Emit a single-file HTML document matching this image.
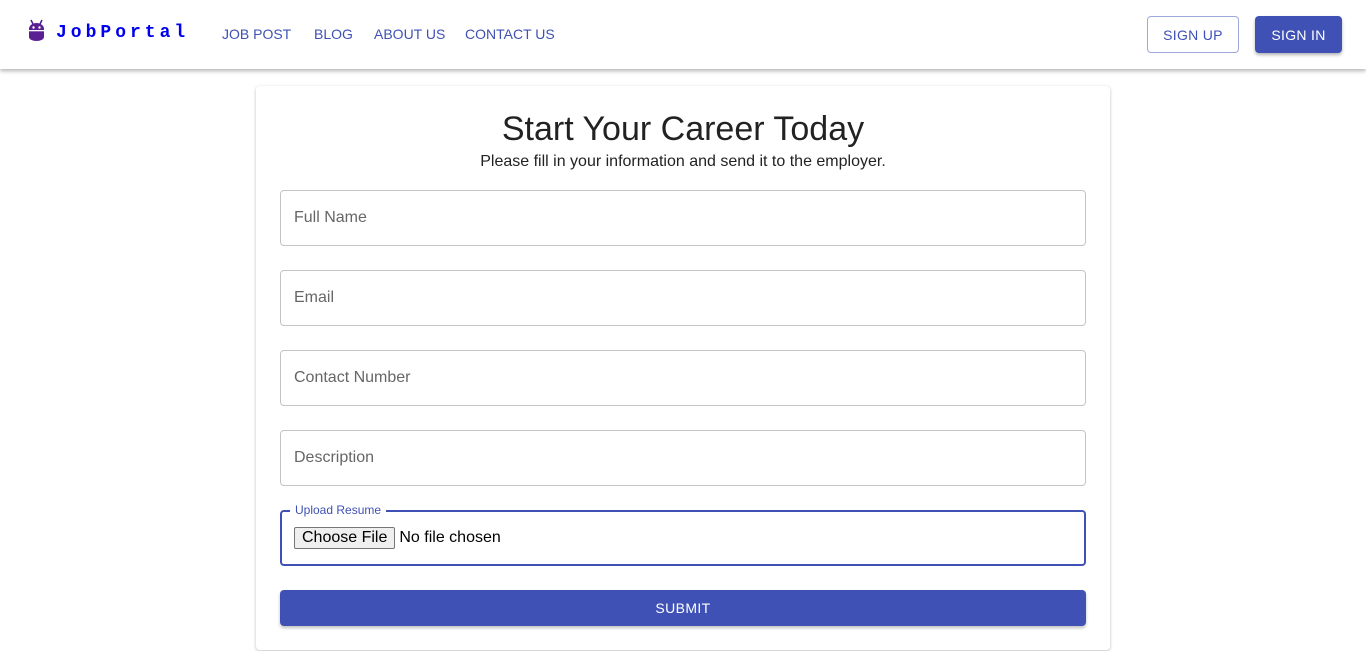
<!DOCTYPE html>
<html><head><style>
*{box-sizing:border-box;margin:0;padding:0}
body{width:1366px;height:651px;overflow:hidden;background:#fff;font-family:"Liberation Sans",sans-serif;position:relative}
.bar{position:absolute;left:0;top:0;width:1366px;height:69px;background:#fff;box-shadow:0 2px 4px rgba(0,0,0,.3);z-index:2}
.logo{position:absolute;left:56px;top:23px;font-family:"Liberation Mono",monospace;font-weight:bold;font-size:18px;letter-spacing:4px;color:#0000ee}
.nav{position:absolute;top:26px;font-size:14px;color:#3f51b5}
.btn{position:absolute;top:16px;height:37px;border-radius:4px;font-size:14px;display:flex;align-items:center;justify-content:center;letter-spacing:.3px}
.card{position:absolute;left:256px;top:86px;width:854px;height:564px;border-radius:4px;box-shadow:0 1px 3px rgba(0,0,0,.25)}
h1{position:absolute;left:0;width:854px;top:24px;text-align:center;font-weight:normal;font-size:34px;color:#222}
.sub{position:absolute;left:0;width:854px;top:67px;text-align:center;font-size:16px;color:#222}
.f{position:absolute;left:24px;width:806px;height:56px;border:1px solid #c4c4c4;border-radius:4px;padding:0 13px;display:flex;align-items:center;font-size:16px;color:#666}
</style></head><body>
<div class="bar">
<svg style="position:absolute;left:28px;top:19px" width="17" height="23" viewBox="0 0 17 23"><path d="M3 1l2 4M14 1l-2 4" stroke="#4a1a8a" stroke-width="1.5"/><path d="M1 10a7.5 6 0 0 1 15 0v8a7.5 4 0 0 1-15 0z" fill="#5b1f94"/><circle cx="5.5" cy="8.5" r="1.2" fill="#fff"/><circle cx="11.5" cy="8.5" r="1.2" fill="#fff"/><rect x="1" y="11" width="15" height="1.3" fill="#fff"/></svg>
<div class="logo">JobPortal</div>
<div class="nav" style="left:222px">JOB POST</div>
<div class="nav" style="left:314px">BLOG</div>
<div class="nav" style="left:374px">ABOUT US</div>
<div class="nav" style="left:465px">CONTACT US</div>
<div class="btn" style="left:1147px;width:92px;border:1px solid #9fa8da;color:#3f51b5">SIGN UP</div>
<div class="btn" style="left:1255px;width:87px;background:#3f51b5;color:#fff;box-shadow:0 2px 3px rgba(0,0,0,.3)">SIGN IN</div>
</div>
<div class="card">
<h1>Start Your Career Today</h1>
<div class="sub">Please fill in your information and send it to the employer.</div>
<div class="f" style="top:104px">Full Name</div>
<div class="f" style="top:184px">Email</div>
<div class="f" style="top:264px">Contact Number</div>
<div class="f" style="top:344px">Description</div>
<div class="f" style="top:424px;border:2px solid #3f51b5;padding:0 12px;color:#000">
<span style="position:absolute;left:8px;top:-9px;background:#fff;padding:0 5px;font-size:12px;color:#3f51b5">Upload Resume</span>
<span style="border:1px solid #767676;background:#efefef;border-radius:2px;padding:1px 7px;font-size:16px;margin-right:4px">Choose File</span>No file chosen</div>
<div style="position:absolute;left:24px;top:504px;width:806px;height:36px;background:#3f51b5;border-radius:4px;color:#fff;font-size:14px;display:flex;align-items:center;justify-content:center;letter-spacing:.4px;box-shadow:0 2px 3px rgba(0,0,0,.25)">SUBMIT</div>
</div>
</body></html>
